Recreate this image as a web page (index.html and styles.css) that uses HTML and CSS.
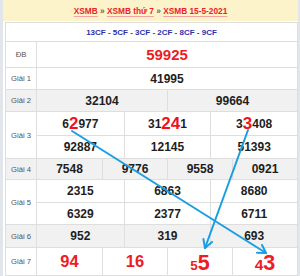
FILE: index.html
```html
<!DOCTYPE html>
<html lang="vi">
<head>
<meta charset="utf-8">
<title>XSMB 15-5-2021</title>
<link rel="stylesheet" href="styles.css">
</head>
<body>
<div class="page">
  <div class="crumbs"><a href="#">XSMB</a><span class="sep"> » </span><a href="#">XSMB thứ 7</a><span class="sep"> » </span><a href="#">XSMB 15-5-2021</a></div>
  <div class="board">
    <div class="codes">13CF - 5CF - 3CF - 2CF - 8CF - 9CF</div>
    <div class="row r-db">
      <div class="lbl">ĐB</div>
      <div class="cells cols-1"><div class="cell db">59925</div></div>
    </div>
    <div class="row r-g1">
      <div class="lbl">Giải 1</div>
      <div class="cells cols-1"><div class="cell">41995</div></div>
    </div>
    <div class="row r-g2 alt">
      <div class="lbl">Giải 2</div>
      <div class="cells cols-2"><div class="cell">32104</div><div class="cell">99664</div></div>
    </div>
    <div class="row r-g3">
      <div class="lbl">Giải 3</div>
      <div class="cells cols-3 two">
        <div class="cell">6<span class="hl">2</span>977</div>
        <div class="cell">31<span class="hl">24</span>1</div>
        <div class="cell">3<span class="hl">3</span>408</div>
        <div class="cell">92887</div>
        <div class="cell">12145</div>
        <div class="cell">51393</div>
      </div>
    </div>
    <div class="row r-g4 alt">
      <div class="lbl">Giải 4</div>
      <div class="cells cols-4">
        <div class="cell">7548</div><div class="cell">9776</div><div class="cell">9558</div><div class="cell">0921</div>
      </div>
    </div>
    <div class="row r-g5">
      <div class="lbl">Giải 5</div>
      <div class="cells cols-3 two">
        <div class="cell">2315</div><div class="cell">6863</div><div class="cell">8680</div>
        <div class="cell">6329</div><div class="cell">2377</div><div class="cell">6711</div>
      </div>
    </div>
    <div class="row r-g6 alt">
      <div class="lbl">Giải 6</div>
      <div class="cells cols-3">
        <div class="cell">952</div><div class="cell">319</div><div class="cell">693</div>
      </div>
    </div>
    <div class="row r-g7">
      <div class="lbl">Giải 7</div>
      <div class="cells cols-4 g7">
        <div class="cell">94</div>
        <div class="cell">16</div>
        <div class="cell"><span class="sm">5</span><span class="big">5</span></div>
        <div class="cell"><span class="md">4</span><span class="big">3</span></div>
      </div>
    </div>
  </div>
</div>
<svg class="arrows" width="300" height="276" viewBox="0 0 300 276" aria-hidden="true">
  <g fill="none" stroke="#1a9ee2" stroke-width="2" stroke-linecap="round" stroke-linejoin="round">
    <path d="M72 131 L266 253"/>
    <path d="M262 245 L266 253 L257 252.7"/>
    <path d="M248 130 L205 248"/>
    <path d="M212 242 L205 248 L203.4 239"/>
  </g>
</svg>
</body>
</html>
```
FILE: styles.css
```css
* { box-sizing: border-box; }
html, body { margin: 0; padding: 0; }
body {
  background: #e2e5e9;
  font-family: "Liberation Sans", Arial, sans-serif;
  position: relative;
  width: 300px;
  height: 276px;
  overflow: hidden;
}
.page {
  margin: 0 2px 0 3px;
  background: #fff;
  height: 276px;
}
.crumbs {
  height: 21px;
  margin-bottom: 1px;
  background: #fdf3cb;
  display: flex;
  align-items: center;
  justify-content: center;
  font-size: 8.3px;
  font-weight: bold;
  white-space: pre;
}
.crumbs a {
  color: #ea2229;
  text-decoration: underline;
  text-decoration-color: #f4a3a3;
  text-underline-offset: 1.5px;
}
.crumbs .sep { color: #666; }
.board {
  margin-left: 2px;
  border: 1px solid #dedede;
  border-bottom: 0;
}
.codes {
  height: 19px;
  border-bottom: 1px solid #dedede;
  display: flex;
  align-items: center;
  justify-content: center;
  font-size: 8px;
  font-weight: bold;
  color: #2e2eb0;
}
.row {
  display: grid;
  grid-template-columns: 31px 1fr;
  border-bottom: 1px solid #dedede;
}
.row.alt { background: #f1f1f1; }
.r-db { height: 26px; }
.r-g1 { height: 22px; }
.r-g2 { height: 22px; }
.r-g3 { height: 47px; }
.r-g4 { height: 21px; }
.r-g5 { height: 45px; }
.r-g6 { height: 23px; }
.r-g7 { height: 28px; }
.lbl {
  border-right: 1px solid #dedede;
  display: flex;
  align-items: center;
  justify-content: center;
  font-size: 7.7px;
  color: #555;
}
.cells { display: grid; }
.cols-1 { grid-template-columns: 1fr; }
.cols-2 { grid-template-columns: repeat(2, 1fr); }
.cols-3 { grid-template-columns: repeat(3, 1fr); }
.cols-4 { grid-template-columns: repeat(4, 1fr); }
.r-g3 .cells { grid-template-rows: 24px 1fr; }
.r-g5 .cells { grid-template-rows: 23px 1fr; }
.cell {
  display: flex;
  align-items: center;
  justify-content: center;
  font-size: 12px;
  font-weight: bold;
  color: #1e1e1e;
  border-left: 1px solid #dedede;
  line-height: 1;
  min-width: 0;
}
.cols-1 .cell,
.cols-2 .cell:nth-child(2n+1),
.cols-3 .cell:nth-child(3n+1),
.cols-4 .cell:nth-child(4n+1) { border-left: 0; }
.two .cell:nth-child(-n+3) { border-bottom: 1px solid #dedede; }
.cell.db { color: #ee1c25; font-size: 15px; }
.hl { color: #f0121b; font-size: 17px; }
.g7 .cell { color: #ee1c25; font-size: 16.5px; align-items: baseline; padding-top: 5px; }
.g7 .sm { font-size: 13.5px; }
.g7 .md { font-size: 15.5px; }
.g7 .big { font-size: 21.5px; }
.arrows {
  position: absolute;
  left: 0;
  top: 0;
  pointer-events: none;
}
```
